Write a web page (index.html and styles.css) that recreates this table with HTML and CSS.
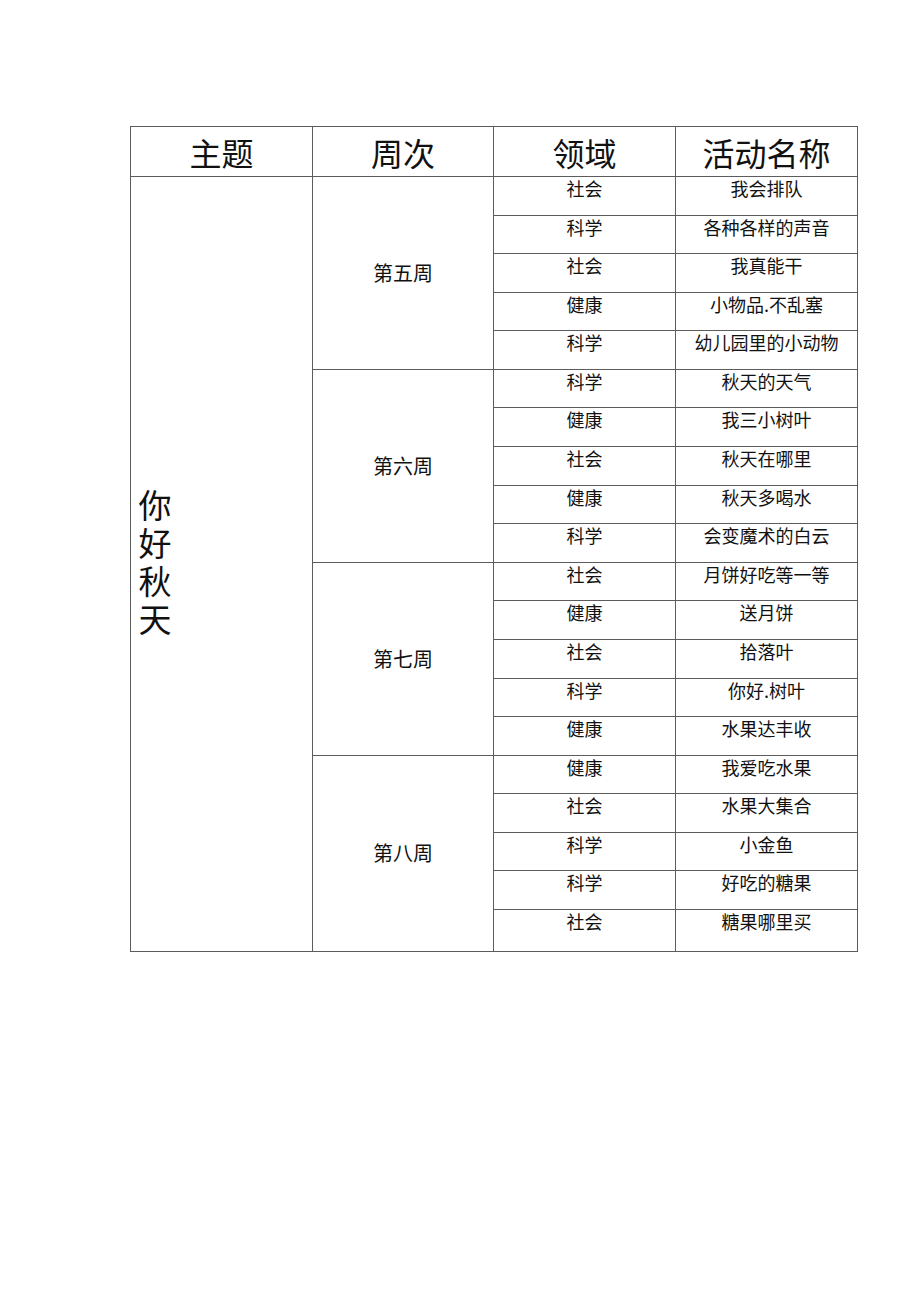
FILE: index.html
```html
<!DOCTYPE html>
<html lang="zh">
<head>
<meta charset="utf-8">
<link rel="stylesheet" href="styles.css">
</head>
<body>
<table class="plan">
  <colgroup><col class="c1"><col class="c2"><col class="c3"><col class="c4"></colgroup>
  <thead>
    <tr class="head"><th>主题</th><th>周次</th><th>领域</th><th>活动名称</th></tr>
  </thead>
  <tbody>
    <tr><td class="theme" rowspan="20"><span class="vert">你好秋天</span></td><td class="week" rowspan="5">第五周</td><td>社会</td><td>我会排队</td></tr>
    <tr><td>科学</td><td>各种各样的声音</td></tr>
    <tr><td>社会</td><td>我真能干</td></tr>
    <tr><td>健康</td><td>小物品.不乱塞</td></tr>
    <tr><td>科学</td><td>幼儿园里的小动物</td></tr>
    <tr><td class="week" rowspan="5">第六周</td><td>科学</td><td>秋天的天气</td></tr>
    <tr><td>健康</td><td>我三小树叶</td></tr>
    <tr><td>社会</td><td>秋天在哪里</td></tr>
    <tr><td>健康</td><td>秋天多喝水</td></tr>
    <tr><td>科学</td><td>会变魔术的白云</td></tr>
    <tr><td class="week" rowspan="5">第七周</td><td>社会</td><td>月饼好吃等一等</td></tr>
    <tr><td>健康</td><td>送月饼</td></tr>
    <tr><td>社会</td><td>拾落叶</td></tr>
    <tr><td>科学</td><td>你好.树叶</td></tr>
    <tr><td>健康</td><td>水果达丰收</td></tr>
    <tr><td class="week" rowspan="5">第八周</td><td>健康</td><td>我爱吃水果</td></tr>
    <tr><td>社会</td><td>水果大集合</td></tr>
    <tr><td>科学</td><td>小金鱼</td></tr>
    <tr><td>科学</td><td>好吃的糖果</td></tr>
    <tr class="last"><td>社会</td><td>糖果哪里买</td></tr>
  </tbody>
</table>
</body>
</html>
```
FILE: styles.css
```css
html, body {
  margin: 0;
  padding: 0;
  background: #ffffff;
}
body {
  font-family: "Noto Sans CJK SC", "Noto Sans", sans-serif;
  color: #111;
}
.plan {
  margin: 126px 0 0 130px;
  border-collapse: collapse;
  table-layout: fixed;
  width: 727px;
}
.c1 { width: 182px; }
.c2 { width: 181px; }
.c3 { width: 182px; }
.c4 { width: 182px; }
.plan th, .plan td {
  border: 1px solid #5c5c5c;
  padding: 0;
}
.head th {
  height: 48px;
  font-weight: 400;
  font-size: 32px;
  line-height: 48px;
  text-align: center;
  vertical-align: middle;
  padding-top: 1px;
}
.plan td {
  height: 38.58px;
  box-sizing: border-box;
  font-size: 18px;
  line-height: 22px;
  text-align: center;
  vertical-align: top;
  padding-top: 0;
}
.plan td.week {
  vertical-align: middle;
  font-size: 20px;
  padding-top: 0;
}
.plan td.theme {
  vertical-align: middle;
  text-align: left;
  padding-left: 6px;
}
.vert {
  display: inline-block;
  writing-mode: vertical-rl;
  text-orientation: upright;
  font-size: 33px;
  line-height: 36px;
  letter-spacing: 5px;
  margin-top: 6px;
}
.last td { height: 42px; }
```
